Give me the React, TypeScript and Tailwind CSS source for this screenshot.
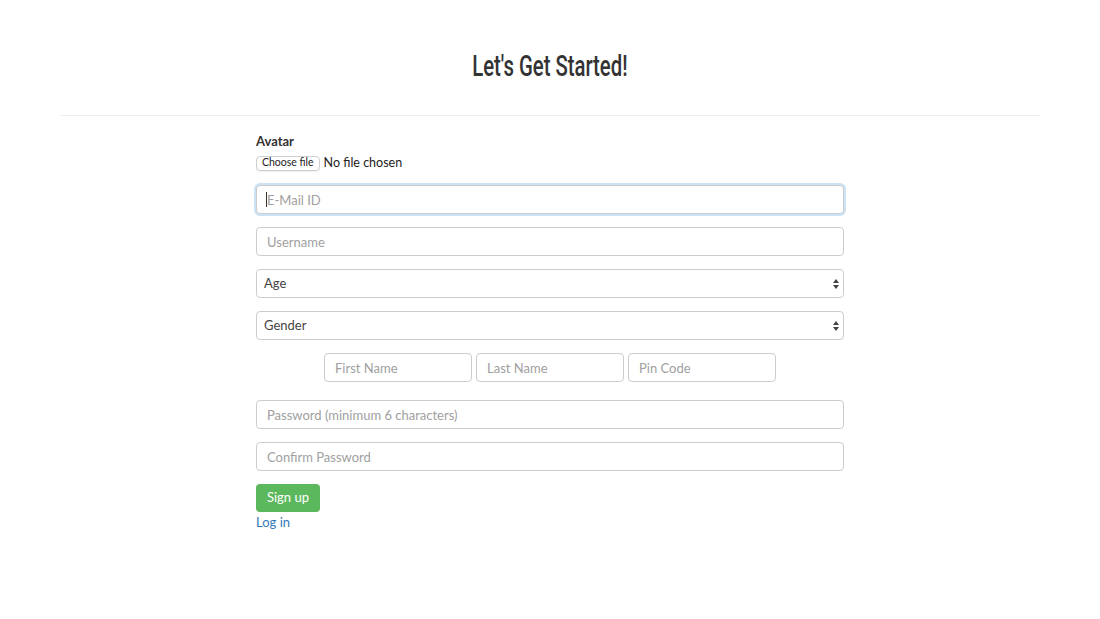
import { useState } from "react";

const body = { fontFamily: "Lato, 'Noto Sans', sans-serif" };

const inputCls =
  "block w-full h-[29px] rounded-[4px] border border-[#cccccc] bg-white px-[10px] text-[13px] text-[#555] placeholder:text-[#a0a0a0] outline-none";

const SelectBox = ({ label }: { label: string }) => (
  <div className="relative flex h-[29px] w-full items-center rounded-[4px] border border-[#cccccc] bg-white pl-[7px] text-[13px] text-[#444]">
    <span>{label}</span>
    <svg
      className="absolute right-[3px] top-1/2 -translate-y-1/2"
      width="8"
      height="12"
      viewBox="0 0 8 12"
    >
      <path d="M4 1 L7 5 L1 5 Z" fill="#444" />
      <path d="M4 11 L7 7 L1 7 Z" fill="#444" />
    </svg>
  </div>
);

const App = () => {
  const [email, setEmail] = useState("");

  return (
    <div className="min-h-screen bg-white pt-[51px]" style={body}>
      <div className="mx-auto w-[980px]">
        <h1
          className="text-center text-[29px] leading-[31px] text-[#333] font-medium"
          style={{ fontFamily: "Roboto, 'DejaVu Sans Condensed', sans-serif" }}
        >
          <span className="inline-block scale-x-[0.7]">Let's Get Started!</span>
        </h1>
        <hr className="mt-[33px] border-0 border-t border-[#eeeeee]" />

        <form className="mx-auto mt-[15px] w-[588px]">
          <label className="block text-[13px] font-bold leading-[20px] text-[#333]">Avatar</label>
          <div className="mt-[3px] flex h-[18px] items-center gap-[4px]">
            <span className="inline-flex h-[15px] items-center rounded-[4px] border border-[#cfcfcf] bg-white px-[5px] text-[10.5px] text-[#222] shadow-[0_1px_1px_rgba(0,0,0,0.06)]">
              Choose file
            </span>
            <span className="text-[12.5px] text-[#222]">No file chosen</span>
          </div>

          <div className="relative mt-[13px]">
            <input
              className={`${inputCls} border-[#7cc3ef] shadow-[0_0_0_2px_rgba(102,175,233,0.35)]`}
              placeholder="E-Mail ID"
              value={email}
              onChange={(e) => setEmail(e.target.value)}
            />
            <span className="pointer-events-none absolute left-[10px] top-[7px] h-[15px] w-px bg-[#333]" />
          </div>

          <input className={`${inputCls} mt-[13px]`} placeholder="Username" />

          <div className="mt-[13px]">
            <SelectBox label="Age" />
          </div>
          <div className="mt-[13px]">
            <SelectBox label="Gender" />
          </div>

          <div className="mt-[13px] flex justify-center gap-[4px]">
            <input className={`${inputCls} !w-[148px]`} placeholder="First Name" />
            <input className={`${inputCls} !w-[148px]`} placeholder="Last Name" />
            <input className={`${inputCls} !w-[148px]`} placeholder="Pin Code" />
          </div>

          <input
            className={`${inputCls} mt-[18px]`}
            type="password"
            placeholder="Password (minimum 6 characters)"
          />
          <input className={`${inputCls} mt-[13px]`} type="password" placeholder="Confirm Password" />

          <button
            type="button"
            className="mt-[13px] block h-[28px] w-[64px] rounded-[4px] bg-[#5cb85c] text-[13px] text-white"
          >
            Sign up
          </button>
          <a href="#" className="mt-[1px] block text-[13px] leading-[18px] text-[#337ab7]">
            Log in
          </a>
        </form>
      </div>
    </div>
  );
};

export default App;
